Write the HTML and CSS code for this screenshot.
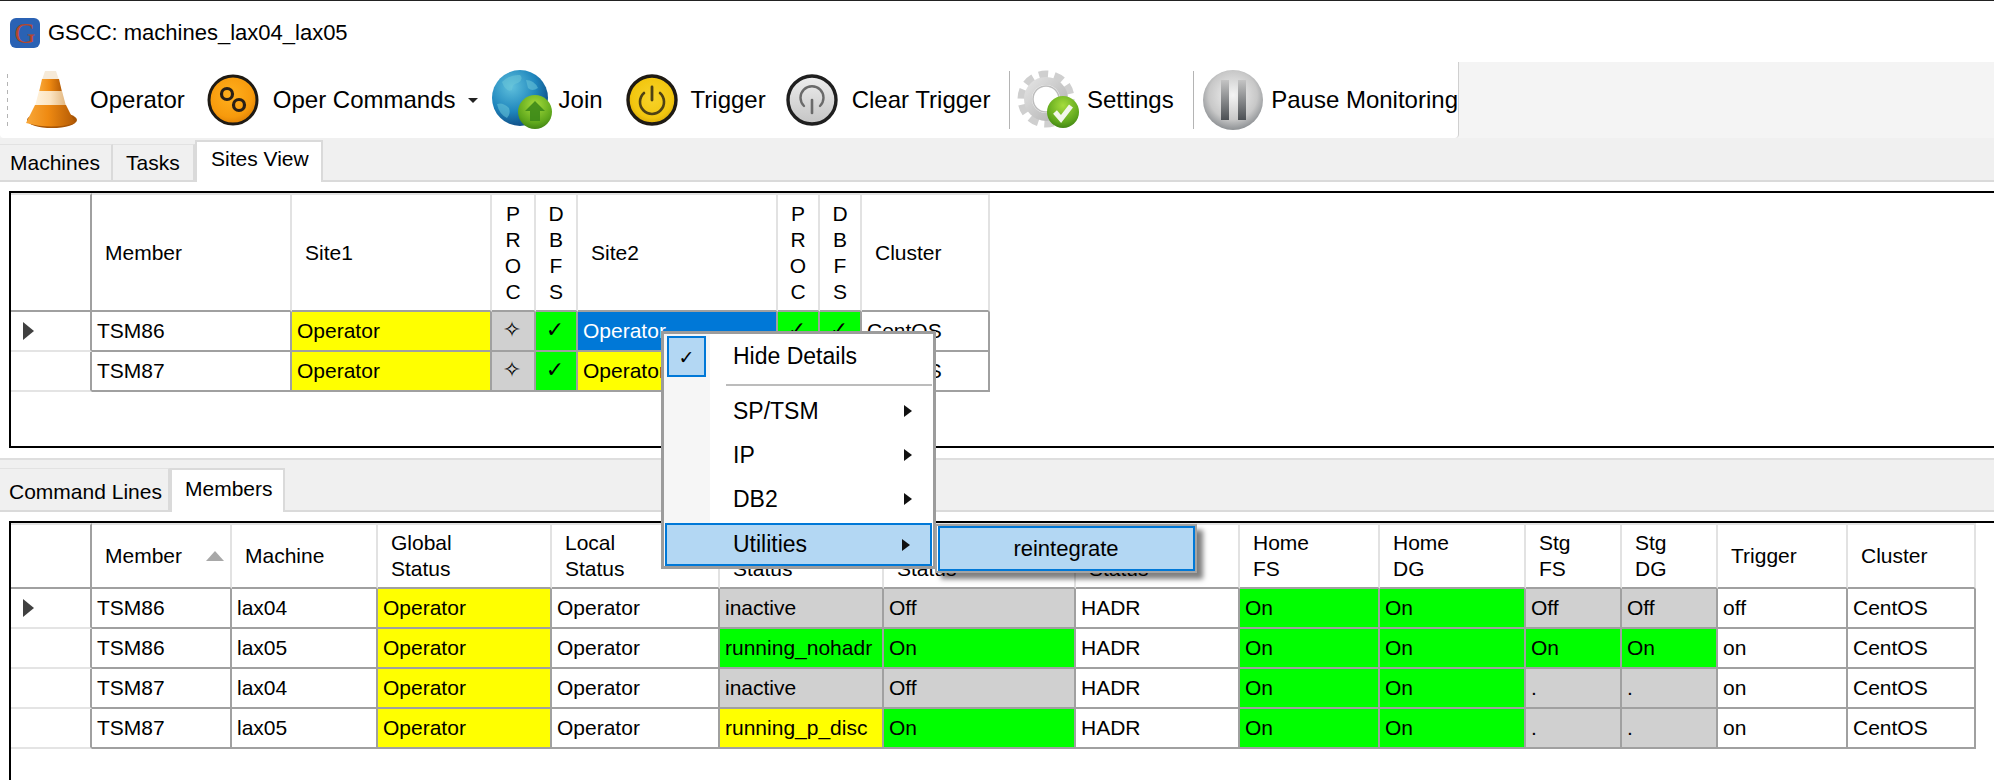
FILE: index.html
```html
<!DOCTYPE html>
<html lang="en">
<head>
<meta charset="utf-8">
<title>GSCC: machines_lax04_lax05</title>
<link rel="stylesheet" href="styles.css">
</head>
<body>
<svg class="defs" width="0" height="0" aria-hidden="true">
  <defs>
    <linearGradient id="coneOrange" x1="0" x2="1" y1="0" y2="0"><stop offset="0" stop-color="#f8a83a"/><stop offset=".45" stop-color="#ef8a12"/><stop offset="1" stop-color="#b35a05"/></linearGradient>
    <linearGradient id="coneCream" x1="0" x2="1" y1="0" y2="0"><stop offset="0" stop-color="#fff2dc"/><stop offset=".5" stop-color="#fbe3c0"/><stop offset="1" stop-color="#e2b67e"/></linearGradient>
    <radialGradient id="orangeBall" cx=".45" cy=".4" r=".65"><stop offset="0" stop-color="#ffb01e"/><stop offset=".7" stop-color="#f79a0c"/><stop offset="1" stop-color="#d97a04"/></radialGradient>
    <radialGradient id="yellowBall" cx=".5" cy=".45" r=".6"><stop offset="0" stop-color="#f7d32a"/><stop offset=".7" stop-color="#f2c60f"/><stop offset="1" stop-color="#d19f06"/></radialGradient>
    <linearGradient id="grayBall" x1="0" x2="0" y1="0" y2="1"><stop offset="0" stop-color="#eeeeee"/><stop offset="1" stop-color="#c4c4c4"/></linearGradient>
    <radialGradient id="globeBall" cx=".35" cy=".3" r=".8"><stop offset="0" stop-color="#5fc0dc"/><stop offset=".55" stop-color="#1f86bd"/><stop offset="1" stop-color="#0c3f78"/></radialGradient>
    <radialGradient id="greenBall" cx=".5" cy=".3" r=".75"><stop offset="0" stop-color="#a5dc3c"/><stop offset=".7" stop-color="#5fa71c"/><stop offset="1" stop-color="#3c7d12"/></radialGradient>
    <radialGradient id="pauseBall" cx=".5" cy=".42" r=".62"><stop offset="0" stop-color="#f4f4f4"/><stop offset=".65" stop-color="#c8c8c8"/><stop offset="1" stop-color="#808488"/></radialGradient>
    <linearGradient id="pauseBar" x1="0" x2="0" y1="0" y2="1"><stop offset="0" stop-color="#c4c4c4"/><stop offset="1" stop-color="#4c5054"/></linearGradient>
    <linearGradient id="gearFill" x1="0" x2="1" y1="0" y2="1"><stop offset="0" stop-color="#e2e2e2"/><stop offset="1" stop-color="#b2b2b2"/></linearGradient>
  </defs>
</svg>

<header class="titlebar">
  <span class="app-icon">G</span>
  <span class="app-title">GSCC: machines_lax04_lax05</span>
</header>

<div class="toolrow">
  <nav class="toolbar">
    <span class="grip"></span>
    <svg class="ico ico-cone" viewBox="0 0 52 60"><ellipse cx="27" cy="50" rx="25" ry="8" fill="#a85505"/><path d="M20 1h11l3 9H17z" fill="#f6ead8"/><path d="M17 9h17l3 13H14z" fill="url(#coneOrange)"/><path d="M14 21h23l4 15H10z" fill="url(#coneCream)"/><path d="M10 35h31l9 18q-23 7-49 0z" fill="url(#coneOrange)"/></svg>
    <span class="tool-label gap-13">Operator</span>
    <svg class="ico ico-orange" viewBox="0 0 52 52"><circle cx="26" cy="26" r="24" fill="url(#orangeBall)" stroke="#1e1a14" stroke-width="3"/><circle cx="20" cy="20" r="5.5" fill="none" stroke="#2a2016" stroke-width="3.2"/><circle cx="32" cy="31" r="5.5" fill="none" stroke="#2a2016" stroke-width="3.2"/></svg>
    <span class="tool-label gap-14">Oper Commands</span>
    <span class="drop-arrow"></span>
    <svg class="ico ico-globe" viewBox="0 0 61 60"><circle cx="28" cy="28" r="28" fill="url(#globeBall)"/><path d="M10 12q8-8 18-7 4 4-2 8-6 1-6 7-6 3-10-8zM34 10q8 0 12 8-6 4-10 0zM5 34q6-2 12 4 2 6-2 10-8-4-10-14z" fill="#6cc7d8" opacity=".55"/><circle cx="43" cy="42" r="17" fill="url(#greenBall)"/><path d="M43 31l10 10h-5v10H38V41h-5z" fill="#3d8a18" opacity=".9"/></svg>
    <span class="tool-label gap-6">Join</span>
    <svg class="ico ico-yellow" viewBox="0 0 52 52"><circle cx="26" cy="26" r="24" fill="url(#yellowBall)" stroke="#1e1a14" stroke-width="3.4"/><path d="M18 19a12 12 0 1 0 16 0" fill="none" stroke="#4e4114" stroke-width="2.6" stroke-linecap="round"/><path d="M26 13v13" stroke="#4e4114" stroke-width="2.8" stroke-linecap="round"/></svg>
    <span class="tool-label gap-13">Trigger</span>
    <svg class="ico ico-gray" viewBox="0 0 52 52"><circle cx="26" cy="26" r="24" fill="url(#grayBall)" stroke="#1f1f1f" stroke-width="3.4"/><path d="M18 32a11.500 11.500 0 1 1 16 0" fill="none" stroke="#6a6a6a" stroke-width="2.4" stroke-linecap="round"/><path d="M26 26v13" stroke="#6a6a6a" stroke-width="2.6" stroke-linecap="round"/></svg>
    <span class="tool-label gap-14">Clear Trigger</span>
    <span class="tool-sep sep-a"></span>
    <svg class="ico ico-gear" viewBox="0 0 64 60"><circle cx="29" cy="29" r="24" fill="none" stroke="#cfcfcf" stroke-width="9" stroke-dasharray="9 6.070"/><circle cx="29" cy="29" r="18" fill="none" stroke="url(#gearFill)" stroke-width="8"/><circle cx="29" cy="29" r="13" fill="#fff" stroke="#bdbdbd" stroke-width="1.500"/><circle cx="46" cy="42" r="16" fill="url(#greenBall)"/><path d="M38 42l6 7 10-13" fill="none" stroke="#f2f6ea" stroke-width="5"/></svg>
    <span class="tool-label gap-6">Settings</span>
    <span class="tool-sep sep-b"></span>
    <svg class="ico ico-pause" viewBox="0 0 62 62"><circle cx="31" cy="31" r="30" fill="url(#pauseBall)"/><rect x="19" y="11" width="8" height="40" fill="url(#pauseBar)"/><rect x="36" y="11" width="8" height="40" fill="url(#pauseBar)"/></svg>
    <span class="tool-label gap-7">Pause Monitoring</span>
  </nav>
</div>

<div class="tabstrip strip-top">
  <span class="tab tab-machines">Machines</span>
  <span class="tab tab-tasks">Tasks</span>
  <span class="tab tab-sites active">Sites View</span>
</div>

<section class="frame frame-sites">
  <div class="grid grid-sites">
    <div class="hd hd-row"></div>
    <div class="hd">Member</div>
    <div class="hd">Site1</div>
    <div class="hd hd-v">P<br>R<br>O<br>C</div>
    <div class="hd hd-v">D<br>B<br>F<br>S</div>
    <div class="hd">Site2</div>
    <div class="hd hd-v">P<br>R<br>O<br>C</div>
    <div class="hd hd-v">D<br>B<br>F<br>S</div>
    <div class="hd">Cluster</div>

    <div class="rh"><span class="row-arrow"></span></div>
    <div class="c">TSM86</div>
    <div class="c y">Operator</div>
    <div class="c n sym">✧</div>
    <div class="c g sym">✓</div>
    <div class="c sel">Operator</div>
    <div class="c g sym">✓</div>
    <div class="c g sym">✓</div>
    <div class="c">CentOS</div>

    <div class="rh"></div>
    <div class="c">TSM87</div>
    <div class="c y">Operator</div>
    <div class="c n sym">✧</div>
    <div class="c g sym">✓</div>
    <div class="c y">Operator</div>
    <div class="c g sym">✓</div>
    <div class="c g sym">✓</div>
    <div class="c">CentOS</div>
  </div>
</section>

<div class="tabstrip strip-bottom">
  <span class="tab tab-cmd">Command Lines</span>
  <span class="tab tab-members active">Members</span>
</div>

<section class="frame frame-members">
  <div class="grid grid-members">
    <div class="hd hd-row"></div>
    <div class="hd hd-sort">Member<span class="sort-arrow"></span></div>
    <div class="hd">Machine</div>
    <div class="hd">Global<br>Status</div>
    <div class="hd">Local<br>Status</div>
    <div class="hd">&nbsp;<br>Status</div>
    <div class="hd">&nbsp;<br>Status</div>
    <div class="hd">&nbsp;<br>Status</div>
    <div class="hd">Home<br>FS</div>
    <div class="hd">Home<br>DG</div>
    <div class="hd">Stg<br>FS</div>
    <div class="hd">Stg<br>DG</div>
    <div class="hd">Trigger</div>
    <div class="hd">Cluster</div>

    <div class="rh"><span class="row-arrow"></span></div>
    <div class="c">TSM86</div><div class="c">lax04</div><div class="c y">Operator</div><div class="c">Operator</div>
    <div class="c n">inactive</div><div class="c n">Off</div><div class="c">HADR</div>
    <div class="c g">On</div><div class="c g">On</div><div class="c n">Off</div><div class="c n">Off</div>
    <div class="c">off</div><div class="c">CentOS</div>

    <div class="rh"></div>
    <div class="c">TSM86</div><div class="c">lax05</div><div class="c y">Operator</div><div class="c">Operator</div>
    <div class="c g">running_nohadr</div><div class="c g">On</div><div class="c">HADR</div>
    <div class="c g">On</div><div class="c g">On</div><div class="c g">On</div><div class="c g">On</div>
    <div class="c">on</div><div class="c">CentOS</div>

    <div class="rh"></div>
    <div class="c">TSM87</div><div class="c">lax04</div><div class="c y">Operator</div><div class="c">Operator</div>
    <div class="c n">inactive</div><div class="c n">Off</div><div class="c">HADR</div>
    <div class="c g">On</div><div class="c g">On</div><div class="c n">.</div><div class="c n">.</div>
    <div class="c">on</div><div class="c">CentOS</div>

    <div class="rh"></div>
    <div class="c">TSM87</div><div class="c">lax05</div><div class="c y">Operator</div><div class="c">Operator</div>
    <div class="c y">running_p_disc</div><div class="c g">On</div><div class="c">HADR</div>
    <div class="c g">On</div><div class="c g">On</div><div class="c n">.</div><div class="c n">.</div>
    <div class="c">on</div><div class="c">CentOS</div>
  </div>
</section>

<div class="menu">
  <div class="mi mi-hide"><span class="mi-check">✓</span><span>Hide Details</span></div>
  <div class="mi-sep"></div>
  <div class="mi"><span>SP/TSM</span><span class="mi-arrow"></span></div>
  <div class="mi"><span>IP</span><span class="mi-arrow"></span></div>
  <div class="mi"><span>DB2</span><span class="mi-arrow"></span></div>
  <div class="mi mi-on"><span>Utilities</span><span class="mi-arrow"></span></div>
</div>
<div class="submenu"><div class="sub-item">reintegrate</div></div>
</body>
</html>
```

FILE: styles.css
```css
* { box-sizing: border-box; }
html, body { margin: 0; padding: 0; }
body {
  width: 1994px;
  height: 780px;
  overflow: hidden;
  position: relative;
  background: #fff;
  color: #000;
  font-family: "Liberation Sans", Arial, sans-serif;
  font-size: 21px;
}
.defs { position: absolute; }

/* title bar */
.titlebar {
  height: 62px;
  border-top: 1px solid #222;
  display: flex;
  align-items: center;
  padding: 3px 0 0 10px;
}
.app-icon {
  width: 30px;
  height: 30px;
  border-radius: 6px;
  background: #2a62b4;
  color: #b5482e;
  font-family: "Liberation Serif", serif;
  font-size: 29px;
  line-height: 30px;
  text-align: center;
}
.app-title { margin-left: 8px; font-size: 22px; }

/* toolbar */
.toolrow { height: 76px; background: #f4f4f4; }
.toolbar {
  width: 1459px;
  height: 76px;
  background: #fff;
  border-radius: 0 0 4px 4px;
  border-right: 1px solid #d0d0d0;
  display: flex;
  align-items: center;
  padding-left: 7px;
}
.grip {
  width: 4px;
  height: 52px;
  background: repeating-linear-gradient(to bottom, #b4b4b4 0 4px, transparent 4px 8px);
}
.ico { flex: none; display: block; }
.ico-cone { width: 52px; height: 60px; margin-left: 17px; }
.ico-orange { width: 52px; height: 52px; margin-left: 22px; }
.ico-globe { width: 61px; height: 60px; margin-left: 14px; }
.ico-yellow { width: 52px; height: 52px; margin-left: 23px; }
.ico-gray { width: 52px; height: 52px; margin-left: 20px; }
.ico-gear { width: 64px; height: 60px; margin-left: 7px; }
.ico-pause { width: 62px; height: 62px; margin-left: 9px; }
.tool-label { font-size: 24px; white-space: nowrap; }
.gap-6 { margin-left: 6px; }
.gap-7 { margin-left: 7px; }
.gap-13 { margin-left: 13px; }
.gap-14 { margin-left: 14px; }
.drop-arrow {
  margin-left: 12px;
  width: 0;
  height: 0;
  border-left: 5px solid transparent;
  border-right: 5px solid transparent;
  border-top: 5px solid #222;
}
.tool-sep { width: 2px; height: 58px; background: #b4b4b4; }
.sep-a, .sep-b { margin-left: 19px; }

/* tab strips */
.tabstrip {
  display: flex;
  align-items: flex-end;
  background: #f0f0f0;
  border-bottom: 2px solid #dadada;
}
.strip-top { height: 44px; }
.strip-bottom { height: 54px; border-top: 2px solid #dedede; margin-top: 10px; }
.tab {
  display: flex;
  align-items: center;
  white-space: nowrap;
  border-top: 1px solid #e2e2e2;
  border-right: 2px solid #dadada;
  height: 36px;
}
.tab.active {
  background: #fff;
  border: 2px solid #dadada;
  border-bottom: none;
  margin-bottom: -2px;
}
.tab-machines { width: 113px; padding-left: 10px; }
.tab-tasks { width: 82px; padding-left: 13px; }
.tab-sites { width: 128px; height: 42px; padding: 0 0 6px 14px; }
.tab-cmd { width: 170px; padding-left: 9px; height: 42px; padding-top: 4px; }
.tab-members { width: 115px; height: 44px; padding: 0 0 4px 13px; }

/* bordered grid frames */
.frame {
  margin-left: 9px;
  border-top: 2px solid #000;
  border-left: 2px solid #000;
  border-bottom: 2px solid #000;
}
.frame-sites { margin-top: 9px; height: 257px; }
.frame-members { margin-top: 9px; height: 270px; border-bottom: none; }
.grid { display: grid; width: max-content; }
.grid-sites {
  grid-template-columns: 81px 200px 200px 44px 42px 200px 42px 42px 128px;
  grid-template-rows: 119px 40px 40px;
}
.grid-members {
  grid-template-columns: 81px 140px 146px 174px 168px 164px 192px 164px 140px 146px 96px 96px 130px 128px;
  grid-template-rows: 66px 40px 40px 40px 40px;
}
.hd {
  display: flex;
  align-items: center;
  padding-left: 13px;
  line-height: 26px;
  white-space: nowrap;
  border-top: 2px solid #e2e2e2;
  border-right: 2px solid #e2e2e2;
  border-bottom: 2px solid #a0a0a0;
}
.hd-row { border-right-color: #a0a0a0; padding: 0; }
.hd-v { padding: 0; justify-content: center; text-align: center; }
.hd-sort { justify-content: space-between; padding-right: 6px; }
.sort-arrow {
  width: 0;
  height: 0;
  border-left: 9px solid transparent;
  border-right: 9px solid transparent;
  border-bottom: 10px solid #a8a8a8;
}
.rh {
  display: flex;
  align-items: center;
  padding-left: 12px;
  border-right: 2px solid #a0a0a0;
  border-bottom: 2px solid #e4e4e4;
}
.row-arrow {
  width: 0;
  height: 0;
  border-top: 9px solid transparent;
  border-bottom: 9px solid transparent;
  border-left: 11px solid #404040;
}
.c {
  display: flex;
  align-items: center;
  padding-left: 5px;
  white-space: nowrap;
  overflow: hidden;
  border-right: 2px solid #a0a0a0;
  border-bottom: 2px solid #a0a0a0;
}
.y { background: #ff0; }
.g { background: #0f0; }
.n { background: #d0d0d0; }
.sel { background: #0078d7; color: #fff; }
.sym {
  justify-content: center;
  padding: 0 2px 4px 0;
  font-family: "DejaVu Sans", sans-serif;
  font-size: 22px;
}

/* context menu */
.menu {
  position: absolute;
  left: 661px;
  top: 331px;
  width: 275px;
  height: 238px;
  border: 3px solid #9c9c9c;
  background: linear-gradient(to right, #f6f6f6 0 46px, #fff 46px);
  font-size: 23px;
}
.mi {
  height: 44px;
  display: flex;
  align-items: center;
  justify-content: space-between;
  padding: 0 21px 0 69px;
}
.mi-hide {
  height: 41px;
  margin-top: 2px;
  justify-content: flex-start;
  padding: 0 0 0 3px;
}
.mi-check {
  width: 39px;
  height: 41px;
  margin-right: 27px;
  display: flex;
  align-items: center;
  justify-content: center;
  background: #b3d7f3;
  border: 2px solid #0078d7;
  font-family: "DejaVu Sans", sans-serif;
  font-size: 19px;
}
.mi-sep {
  height: 2px;
  margin: 7px 1px 3px 62px;
  background: #bcbcbc;
}
.mi-arrow {
  width: 0;
  height: 0;
  border-top: 6px solid transparent;
  border-bottom: 6px solid transparent;
  border-left: 8px solid #111;
}
.mi-on {
  height: 43px;
  margin: 2px 1px 0;
  padding: 0 20px 0 66px;
  background: #b3d7f3;
  border: 2px solid #0078d7;
}
.submenu {
  position: absolute;
  left: 935px;
  top: 524px;
  width: 262px;
  height: 49px;
  border: 2px solid #a4a4a4;
  background: #fff;
  box-shadow: 6px 6px 5px rgba(0, 0, 0, .5);
  font-size: 22px;
}
.sub-item {
  height: 100%;
  margin: 0 0 0 1px;
  display: flex;
  align-items: center;
  justify-content: center;
  padding-right: 1px;
  background: #b3d7f3;
  border: 2px solid #0078d7;
}
```
